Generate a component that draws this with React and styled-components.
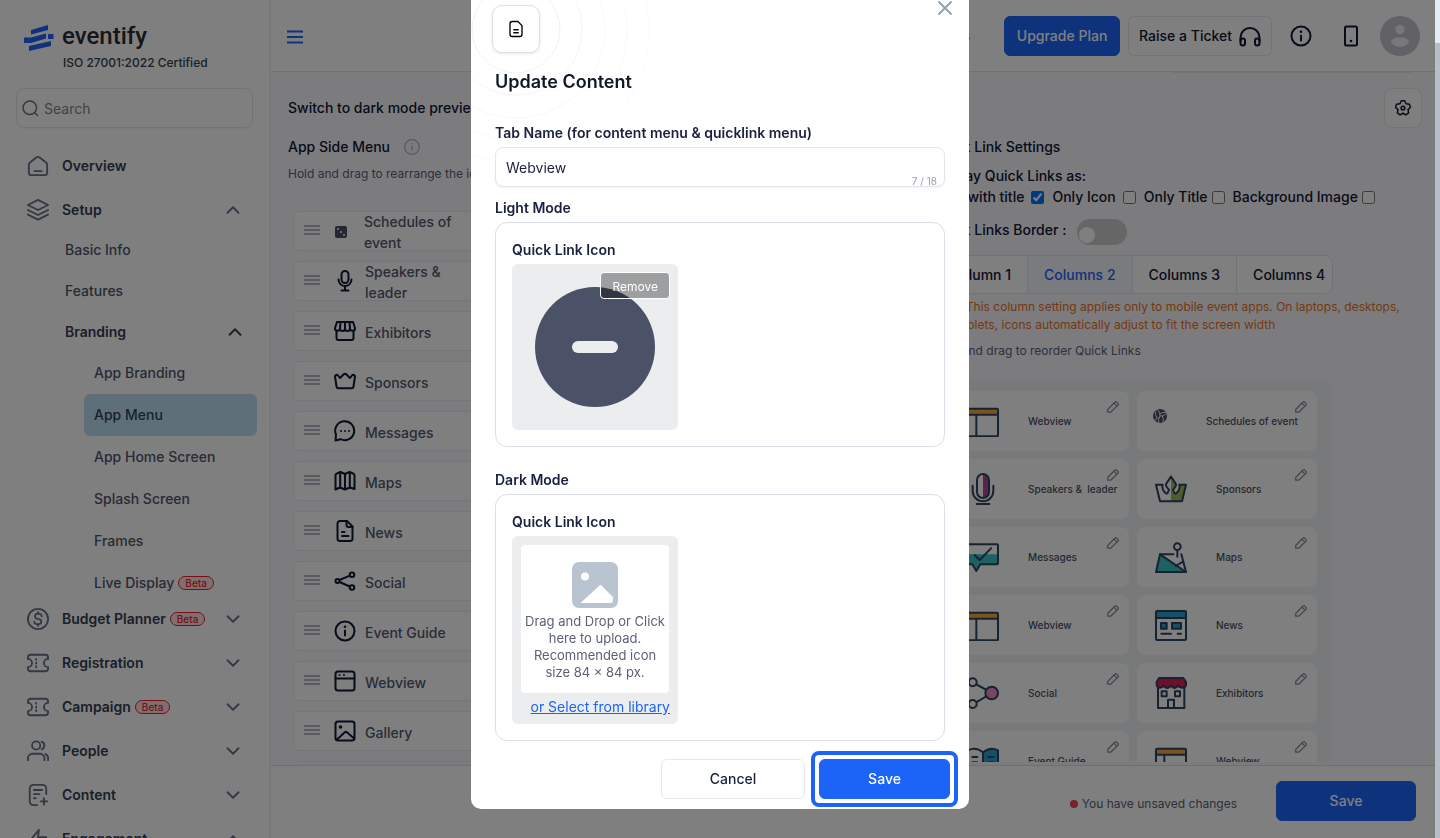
import React from "react";
import styled, { createGlobalStyle, css } from "styled-components";
import { ChevronDown, ChevronUp, X } from "lucide-react";

const Global = createGlobalStyle`
  *, *::before, *::after { box-sizing: border-box; }
  body { margin: 0; font-family: Inter, "Liberation Sans", sans-serif; font-size: 14px; line-height: 20px; color: #101633; background: #fff; overflow: hidden; }
  button, input { font: inherit; color: inherit; }
  button { cursor: pointer; }
  h1, h2, h3, p, ul, fieldset { margin: 0; padding: 0; }
  ul { list-style: none; }
  a { color: inherit; text-decoration: none; }
  svg { display: block; flex: none; }
`;

/* ---------- icons ---------- */

const Line = ({ size = 24, w = 2, children }) => (
  <svg width={size} height={size} viewBox="0 0 24 24" fill="none" stroke="currentColor" strokeWidth={w} strokeLinecap="round" strokeLinejoin="round" aria-hidden="true">
    {children}
  </svg>
);

const Dots = ({ points, r = 1 }) => points.map(([x, y]) => <circle key={`${x}-${y}`} cx={x} cy={y} r={r} fill="currentColor" stroke="none" />);

const Ticket = () => (
  <>
    <path d="M1 6a3 3 0 0 1 3-3h16a3 3 0 0 1 3 3v1.500a4.500 4.500 0 0 0 0 9V18a3 3 0 0 1-3 3H4a3 3 0 0 1-3-3v-1.500a4.500 4.500 0 0 0 0-9z" />
    <path d="M10 7.500v1M10 11.500v1M10 15.500v1" />
  </>
);

const navIcons = {
  overview: <><path d="M2 10.500a3 3 0 0 1 1.200-2.400l7-5.400a3 3 0 0 1 3.600 0l7 5.400a3 3 0 0 1 1.200 2.400V19a3 3 0 0 1-3 3H5a3 3 0 0 1-3-3z" /><path d="M8 17.500h8" /></>,
  setup: <><path d="M12 1 1 6.500 12 12l11-5.500z" /><path d="m1 12 11 5.500L23 12" /><path d="m1 17 11 5.500L23 17" /></>,
  budget: <><circle cx="12" cy="12" r="11" /><path d="M8 15a2.800 2.800 0 0 0 2.800 2.600h2.200a2.700 2.700 0 0 0 .6-5.300l-3.200-.8a2.700 2.700 0 0 1 .6-5.200h2A2.800 2.800 0 0 1 16 9M12 4.500v1.800M12 17.600v1.900" /></>,
  ticket: <Ticket />,
  people: <><circle cx="10" cy="6" r="4.500" /><path d="M1 22v-2a5 5 0 0 1 5-5h8a5 5 0 0 1 5 5v2M16 1.800a4.500 4.500 0 0 1 0 8.400M23 22v-2a5 5 0 0 0-3-4.600" /></>,
  content: <><path d="M21 11V5a4 4 0 0 0-4-4H7a4 4 0 0 0-4 4v14a4 4 0 0 0 4 4h4M7.500 6.500h9M7.500 11h6M7.500 15.500h2M18.500 15.500v7M15 19h7" /></>,
  engagement: <path d="M13 2 3 14h9l-1 8 10-12h-9z" />,
};

const menuIcons = {
  mic: <><rect x="8.500" y="2" width="7" height="12" rx="3.500" /><path d="M5.500 10.500a6.500 6.500 0 0 0 13 0M12 17v4M8.500 21.500h7" /></>,
  shop: <><path d="M4 3h16l2 6a2.500 2.500 0 0 1-5 .5 2.500 2.500 0 0 1-5 0 2.500 2.500 0 0 1-5 0A2.500 2.500 0 0 1 2 9zM7.500 3 7 9.500M12 3v6.500M16.500 3l.5 6.500" /><path d="M3.500 12v7a2 2 0 0 0 2 2h13a2 2 0 0 0 2-2v-7" /></>,
  crown: <path d="M2 7.500A1.700 1.700 0 0 1 5 6.500l2 2.500 3.500-3.500a2 2 0 0 1 3 0L17 9l2-2.500a1.700 1.700 0 0 1 3 1l-1.500 10a2 2 0 0 1-2 1.700h-13a2 2 0 0 1-2-1.700z" />,
  chat: <><path d="M2.500 21.500 3 15.500a9.500 9.500 0 1 1 4.500 4.700z" /><Dots points={[[8, 12], [12, 12], [16, 12]]} /></>,
  map: <><path d="M2.500 6.500a2 2 0 0 1 1.500-2L7.500 3l4.500 2 4.500-2 3.500 1.500a2 2 0 0 1 1.500 2V20L17 18.500 12 20.500 7 18.500 2.500 20.500z" /><path d="M7.200 3.500v15M12 5v15M16.800 3.500v15" /></>,
  news: <><path d="M14 2H7a2.500 2.500 0 0 0-2.500 2.500v15A2.500 2.500 0 0 0 7 22h10a2.500 2.500 0 0 0 2.500-2.500V7.500z" /><path d="M13.500 2v4a2 2 0 0 0 2 2h4M9 13h2.500M9 17h6.500" /></>,
  share: <><circle cx="4.500" cy="12" r="2" /><circle cx="19" cy="5.800" r="2.300" /><circle cx="19" cy="18.500" r="2.300" /><path d="m6.500 11 10.300-4.300M6.500 13l10.300 4.500" /></>,
  info: <><circle cx="12" cy="12" r="9.500" /><path d="M12 11.500v5" /><Dots points={[[12, 7.800]]} r={1.300} /></>,
  window: <><rect x="2.500" y="2.500" width="19" height="19" rx="2.500" /><path d="M2.500 9.500h19" /><Dots points={[[6.500, 6], [11, 6]]} /></>,
  gallery: <><rect x="2.500" y="2.500" width="19" height="19" rx="2.500" /><path d="M4 20.500l7.500-7a2 2 0 0 1 2.700 0l7 6" /><Dots points={[[7.500, 8]]} r={1.800} /></>,
};

const Dice = () => (
  <svg width="12" height="24" viewBox="0 0 12 24" aria-hidden="true">
    <rect y="7" width="12" height="12" rx="2" fill="#4a5066" />
    {[3, 6, 9].map((n) => <circle key={n} cx={n} cy={n + 7} r="1" fill="#fff" />)}
  </svg>
);

const ink = "#2f4560";
const Art = ({ children, size = 32 }) => (
  <svg width={size} height={size} viewBox="0 0 96 96" fill="none" stroke={ink} strokeWidth="6" strokeLinecap="round" strokeLinejoin="round" aria-hidden="true">
    {children}
  </svg>
);

const art = {
  webview: <><path d="M3 11h90v18H3z" fill="#f5a83d" stroke="none" /><rect x="3" y="11" width="90" height="83" rx="3" /><path d="M3 29h90M28 29v65" /></>,
  mic: <><path d="M48 3c10 0 18 8 18 18v36c0 10-8 18-18 18z" fill="#b8439f" stroke="none" /><rect x="30" y="3" width="36" height="72" rx="18" /><path d="M17 38v16a31 31 0 0 0 62 0V38M29 93h38" /></>,
  crown: <><path d="M48 11l14 21c4 8-4 13-8 18l4 10c4 6 14-5 16-17l-1-8h20L81 85H48z" fill="#98bd5c" stroke="none" /><path d="M48 11 34 32c-4 8 4 13 8 18l-2 6 8 6 8-6-2-6c4-5 12-10 8-18z" fill="#fff" stroke="none" /><path d="M48 11l14 21c4 8-4 13-8 18v35h-6z" fill="#98bd5c" stroke="none" /><path d="M3 35h20l-1 8c2 12 12 23 16 17l4-10c-4-5-12-10-8-18l14-21 14 21c4 8-4 13-8 18l4 10c4 6 14-5 16-17l-1-8h20L81 85H15z" /></>,
  messages: <><path d="M3 40h90v30H38L28 90 18 70H3z" fill="#3cc3c6" stroke="none" /><path d="M6 10h84q3 0 3 3v54q0 3-3 3H40L28 90 16 70H6q-3 0-3-3V13q0-3 3-3z" /><path d="m23 42 15 15 34-35" /></>,
  maps: <><path d="M15 40 3 93h90z" fill="#3cc3c6" /><path d="M15 40h40M79 40l14 53M62 75l22-13" /><circle cx="67" cy="17" r="10" /><path d="M67 27v20" /></>,
  news: <><path d="M3 6h90v21H3z" fill="#2f9fd0" stroke="none" /><rect x="3" y="6" width="90" height="87" rx="3" /><path d="M3 27h90M19 74h29M68 74h10" /><path d="M18 42h17v17H18zM51 42h27v17H51z" fill="#2f9fd0" /></>,
  social: <><path d="m17 16 58 32-58 34" /><circle cx="17" cy="16" r="12" fill="#fff" /><circle cx="17" cy="81" r="12" fill="#fff" /><circle cx="74" cy="48" r="19" fill="#f08ac8" /></>,
  exhibitors: <><path d="M9 30v63h79V30M39 93V68h18v25M20 43h15v15H20zM60 43h15v15H60z" /><path d="M12 3h73l8 12v9q-2 8-12 8-8 0-12-6-4 6-11 7-6-2-10-8-4 6-11 8-7-1-11-7-4 6-11 6-8 0-10-8v-9z" fill="#e01f56" /></>,
  guide: <><path d="M48 22q22-18 45-6v66q-23-8-45 4z" fill="#2f9fd0" /><path d="M48 22Q26 4 3 16v66q23-8 45 4zM16 36h15M16 52h15M64 36h15M64 52h15" /></>,
};

const Volley = () => (
  <svg width="14" height="14" viewBox="0 0 24 24" aria-hidden="true">
    <circle cx="12" cy="12" r="12" fill="#4a5066" />
    <path d="M12 12A14 14 0 0 0 7 0M12 12a14 14 0 0 0 11-4M12 12a14 14 0 0 0-2 12M12 8a13 13 0 0 1 10-2M9 14a13 13 0 0 1-8 6M16 12a13 13 0 0 1 1 11M6 15A13 13 0 0 1 5 4" fill="none" stroke="#fff" strokeWidth="1.600" />
  </svg>
);

/* ---------- page shell ---------- */

const Page = styled.div`display: flex; height: 100vh; overflow: hidden;`;
const Sidebar = styled.aside`width: 271px; flex: none; border-right: 2px solid #f0f0f3; overflow: hidden; background: #fff;`;
const Main = styled.main`flex: 1; min-width: 0; display: flex; flex-direction: column; background: #f8f8fc;`;

const Brand = styled.div`display: flex; gap: 8px; padding: 20px 0 0 24px; color: #2c2c34;`;
const Mark = styled.svg`margin-top: 5px;`;
const Wordmark = styled.div`font-family: Roboto, sans-serif; font-size: 24px; line-height: 32px; font-weight: 500;`;
const Iso = styled.p`padding: 1px 0 0 63px; font-size: 12px; line-height: 20px; font-weight: 500; color: #344054;`;

const SearchBox = styled.label`
  display: flex; align-items: center; gap: 5px; height: 40px; margin: 15px 16px 20px; padding: 0 5px;
  border: 1px solid #e6e7ee; border-radius: 8px; box-shadow: 0 1px 2px rgba(16, 24, 40, .05); color: #667085;
  input { min-width: 0; flex: 1; border: 0; outline: 0; padding: 2px 0 0; background: none; }
  input::placeholder { color: #858585; opacity: 1; }
`;

const NavRow = styled.button`
  display: flex; align-items: center; gap: 13px; width: 100%; height: 36px; margin-bottom: ${(p) => (p.$open ? 0 : 8)}px;
  padding: 0 25px 0 27px; border: 0; background: none; color: #667085; text-align: left;
`;
const NavText = styled.span`flex: 1; display: flex; align-items: center; gap: 4px; font-weight: 600; color: #344054;`;
const Sub = styled.ul`padding-top: 1px; margin-bottom: -3px;`;
const SubLink = styled.a`
  display: flex; align-items: center; justify-content: space-between; height: 41px; padding: 0 23px 0 65px;
  font-weight: ${(p) => (p.$strong ? 600 : 500)}; color: ${(p) => (p.$strong ? "#344054" : "#4f556b")};
`;
const DeepLink = styled.a`
  display: flex; align-items: center; gap: 4px; height: 42px; margin: 0 12px 0 84px; padding-left: 10px; border-radius: 6px;
  font-weight: 500; color: ${(p) => (p.$active ? "#3b3f4d" : "#4f556b")}; background: ${(p) => (p.$active ? "#bcdff3" : "none")};
`;
const Beta = styled.span`
  height: 14px; padding: 0 6px; border: 1px solid #ee1f2b; border-radius: 8px; font-size: 10px; line-height: 12px; font-weight: 500; color: #ee1f2b; background: #ffdfe0;
`;

const TopBar = styled.header`
  display: flex; align-items: center; height: 72px; flex: none; padding: 0 20px 0 16px; border-bottom: 1px solid #e3e3ea; background: #fff;
`;
const IconButton = styled.button`display: grid; place-items: center; padding: 0; border: 0; background: none; color: ${(p) => p.$color || "#101633"};`;
const TopActions = styled.div`display: flex; align-items: center; margin-left: auto; font-weight: 500;`;
const DocsLink = styled.a`margin-right: 34px;`;

const Button = styled.button`
  height: 40px; border-radius: 6px; font-weight: 500; padding: 0; border: 1px solid #e8e8ef; background: #fff; white-space: nowrap;
  display: inline-flex; align-items: center; justify-content: center; gap: 6px; width: ${(p) => p.$width || "auto"};
  ${(p) => p.$primary && css`border-color: #1c64f8; background: #1c64f8; color: #fff;`}
`;
const RaiseButton = styled(Button)`margin: 0 17px 0 8px; padding: 0 9px 0 10px;`;
const PhoneButton = styled(IconButton)`margin: 0 17px 0 26px;`;

const Body = styled.div`flex: 1; min-height: 0; overflow: hidden; padding: 0 18px 0 17px; margin-bottom: 3px;`;
const ScrolledEdge = styled.div`width: 240px; height: 1px; margin: 0 10px 15px auto; background: #e9e9f1;`;
const PreviewRow = styled.div`display: flex; align-items: center; justify-content: space-between; height: 40px; font-weight: 500;`;
const GearButton = styled(Button)`padding: 0 9px; border-radius: 8px;`;
const Columns = styled.div`display: grid; grid-template-columns: minmax(0, 1fr) 490px; padding-top: 9px;`;
const Heading = styled.h2`display: flex; align-items: center; gap: 14px; font-size: 14px; line-height: 20px; font-weight: 500;`;
const Hint = styled.p`font-size: 12px; line-height: 18px; color: #5c6178;`;
const MenuHint = styled(Hint)`margin-top: 8px;`;

const MenuList = styled.ul`display: flex; flex-direction: column; gap: 10px; width: 300px; margin: 28px 0 0 5px;`;
const MenuItem = styled.li`
  display: flex; align-items: center; height: 40px; padding-left: 10px; border: 1px solid #ececf2; border-radius: 6px; background: #fff;
  svg { margin: 0 8px 0 13px; }
`;
const Grip = styled.span`width: 16px; height: 10px; margin-bottom: 2px; border-top: 2px solid #b5b7c3; border-bottom: 2px solid #b5b7c3;
  background: linear-gradient(#b5b7c3, #b5b7c3) 0 2px / 16px 2px no-repeat; flex: none;`;
const DiceSlot = styled.span`display: flex; margin: 0 9px 0 2px; padding-right: 8px; svg { margin-right: 0; }`;
const MenuLabel = styled.span`max-width: 100px; padding-top: 2px; line-height: 21px; font-weight: 500; color: #535970;`;

const Settings = styled.section`font-weight: 500;`;
const DisplayAs = styled.p`padding-top: 9px; line-height: 20px;`;
const Checks = styled.div`display: flex; align-items: center; height: 22px; padding-left: 3px; white-space: nowrap; gap: 8px;`;
const Check = styled.label`
  display: flex; align-items: center; gap: ${(p) => (p.$wide ? 7 : 4)}px;
  input { width: 13px; height: 13px; margin: 0; }
`;
const BorderRow = styled.label`display: flex; align-items: flex-start; gap: 11px; height: 26px; margin: 11px 0 10px; line-height: 22px;`;
const Switch = styled.input`
  appearance: none; width: 50px; height: 26px; margin: 0; padding: 8px 0 0 2px; border-radius: 13px; background: #ccc;
  &::before { content: ""; display: block; width: 16px; height: 16px; border-radius: 50%; background: #fff; }
`;
const Tabs = styled.div`display: flex; width: 401px; height: 39px; border: 1px solid #e3e4ef; border-radius: 8px; background: #fff; overflow: hidden;`;
const Tab = styled.button`
  padding: 0 16px; border: 0; border-right: 1px solid #e3e4ef; white-space: nowrap; font-weight: 500; background: ${(p) => (p.$on ? "#f4f6fc" : "none")};
  color: ${(p) => (p.$on ? "#1c64f8" : "inherit")};
  &:first-child { padding-left: 17px; }
  &:last-child { border-right: 0; padding-right: 0; }
`;
const Note = styled(Hint)`margin: 4px 0 8px; font-weight: 400; color: #ea7222;`;
const PlainHint = styled(Hint)`font-weight: 400;`;
const LinkPanel = styled.ul`
  display: grid; grid-template-columns: 180px 180px; gap: 8px; width: 400px; margin-top: 19px; padding: 12px 15px 12px 17px; border-radius: 8px; background: #f1f3f6;
`;
const LinkCard = styled.li`
  position: relative; display: flex; align-items: center; gap: 29px; height: 60px; padding-left: 18px; border-radius: 8px; background: #fff;
  font-size: 10px; line-height: 14px; font-weight: 500; color: #4a4f64; white-space: pre;
`;
const SmallCard = styled(LinkCard)`gap: 39px; padding-left: 16px; svg:first-child { margin-bottom: 10px; }`;
const EditButton = styled(IconButton)`position: absolute; top: 9px; right: 9px; color: #85899a;`;

const FooterBar = styled.footer`
  display: flex; align-items: center; justify-content: flex-end; height: 73px; flex: none; padding: 0 24px 2px; border-top: 1px solid #dfdfe6; background: #fff;
`;
const Unsaved = styled.p`display: flex; align-items: center; gap: 4px; margin: 6px 39px 0 0; font-size: 12px; color: #5c6178;
  &::before { content: ""; width: 8px; height: 8px; border-radius: 50%; background: #e5484d; }`;

/* ---------- dialog ---------- */

const Overlay = styled.div`position: fixed; inset: 0; display: flex; justify-content: center; align-items: flex-start; background: rgba(0, 0, 0, .5);`;
const ScrollTrack = styled.div`position: absolute; top: 0; right: 0; bottom: 0; width: 5px; padding-top: 43px; background: #e3ebf3;
  &::before { content: ""; display: block; height: 100%; background: #b8bdc7; }`;
const Dialog = styled.form`position: relative; width: 498px; padding-bottom: 2px; border-radius: 0 0 10px 10px; background: #fff; color: #1a2140; overflow: hidden;`;
const Rings = styled.svg`position: absolute; top: 0; left: 0;`;
const DialogTop = styled.div`position: relative; display: flex; justify-content: space-between; align-items: flex-start; padding: 5px 12px 0 21px;`;
const DialogIcon = styled.span`display: grid; place-items: center; width: 48px; height: 48px; border: 1px solid #dfe1ea; border-radius: 10px; background: #fff; color: #000; box-shadow: 0 1px 3px rgba(16, 24, 40, .1);`;
const CloseButton = styled(IconButton)`margin-top: -9px;`;
const DialogBody = styled.div`position: relative; padding: 15px 24px 0;`;
const Title = styled.h1`margin-bottom: 27px; font-size: 18px; line-height: 28px; font-weight: 600; color: #101828;`;
const Label = styled.label`display: block; line-height: 20px; font-weight: 600;`;
const Field = styled.div`
  position: relative; margin: 4px 0 11px;
  input { display: block; width: 100%; height: 40px; padding: 0 10px; border: 1px solid #e4e6ec; border-radius: 8px; background: #fff; outline: 0; box-shadow: 0 1px 2px rgba(16, 24, 40, .05); }
`;
const Counter = styled.span`position: absolute; right: 8px; bottom: 0; font-size: 10px; line-height: 12px; color: #98a2b3;`;
const ModeTitle = styled.h2`font-size: 14px; line-height: 20px; font-weight: 600;`;
const ModeBox = styled.section`margin: 4px 0 ${(p) => (p.$last ? 10 : 23)}px; padding: 17px 16px 16px; border: 1px solid #dddfe8; border-radius: 12px;`;
const IconName = styled.h3`margin-bottom: 4px; font-size: 14px; line-height: 20px; font-weight: 600;`;
const IconTile = styled.div`position: relative; width: 166px; padding: ${(p) => (p.$empty ? "9px 8px 7px 9px" : "23px")}; border-radius: 6px; background: #ecedef;`;
const RemoveButton = styled.button`position: absolute; top: 8px; right: 8px; height: 27px; padding: 2px 11px 0; border: 1px solid #fff; border-radius: 4px; font-size: 12px; line-height: 22px; color: #fff; background: rgba(0, 0, 0, .33);`;
const DropZone = styled.button`
  display: flex; flex-direction: column; align-items: center; gap: 5px; width: 148px; height: 148px; padding: 17px 0 0; border: 0; border-radius: 4px;
  background: #fff; color: #5c6178; font-size: 13px; line-height: 17px;
`;
const LibraryLink = styled.a`display: block; margin-top: 4px; line-height: 20px; text-align: right; color: #1c64f8; text-decoration: underline; white-space: nowrap;`;
const Actions = styled.div`display: flex; justify-content: flex-end; align-items: center; gap: 6px; padding-right: 11px;`;
const FocusRing = styled.span`display: flex; padding: 4px; border: 4px solid #1c64f8; border-radius: 8px;`;

const sideMenu = [
  ["Speakers & leader", "mic"], ["Exhibitors", "shop"], ["Sponsors", "crown"], ["Messages", "chat"], ["Maps", "map"], ["News", "news"],
  ["Social", "share"], ["Event Guide", "info"], ["Webview", "window"], ["Gallery", "gallery"],
];
const quickLinks = [
  ["Speakers &  leader", "mic"], ["Sponsors", "crown"], ["Messages", "messages"], ["Maps", "maps"], ["Webview", "webview"],
  ["News", "news"], ["Social", "social"], ["Exhibitors", "exhibitors"], ["Event Guide", "guide"], ["Webview", "webview"],
];

const NavGroup = ({ icon, text, beta, open, plain }) => (
  <NavRow type="button" $open={open && !plain}>
    <Line size={22} w={2}>{navIcons[icon]}</Line>
    <NavText>{text}{beta && <Beta>Beta</Beta>}</NavText>
    {plain ? null : open ? <ChevronUp size={22} strokeWidth={2} /> : <ChevronDown size={22} strokeWidth={2} />}
  </NavRow>
);

const Edit = ({ name }) => (
  <EditButton type="button" aria-label={`Edit ${name}`}>
    <svg width="14" height="14" viewBox="0 0 14 14" fill="none" stroke="currentColor" strokeWidth="1.200" strokeLinejoin="round">
      <path d="M1.700 9.500 9 2a1 1 0 0 1 1.500 0l1.600 1.600a1 1 0 0 1 0 1.400l-7.400 7.200H1.700zM8 3.200l2.900 2.900" />
    </svg>
  </EditButton>
);

const LinkTile = ({ name, icon }) => (
  <LinkCard><Art>{art[icon]}</Art><span>{name}</span><Edit name={name} /></LinkCard>
);

const NavSidebar = () => (
  <Sidebar>
    <Brand>
      <Mark width="30" height="27" viewBox="0 0 30 27" fill="#1c64f8" aria-hidden="true">
        <path d="M7 5 24 0v5L7 9.500zM0 12.500h7L22 8.500v5L7 18H0zM24 9h5.500v5H24zM5 21l22-5v5L5 26z" />
      </Mark>
      <Wordmark>eventify</Wordmark>
    </Brand>
    <Iso>ISO 27001:2022 Certified</Iso>
    <SearchBox>
      <Line size={17} w={2}><circle cx="11" cy="11" r="9.500" /><path d="m18.500 18.500 3.500 3.500" /></Line>
      <input type="search" placeholder="Search" aria-label="Search" />
    </SearchBox>
    <nav>
      <NavGroup icon="overview" text="Overview" plain />
      <NavGroup icon="setup" text="Setup" open />
      <Sub>
        <li><SubLink href="#basic">Basic Info</SubLink></li>
        <li><SubLink href="#features">Features</SubLink></li>
        <li>
          <SubLink href="#branding" $strong>Branding<ChevronUp size={22} strokeWidth={2} /></SubLink>
          <ul>
            {["App Branding", "App Menu", "App Home Screen", "Splash Screen", "Frames", "Live Display"].map((t) => (
              <li key={t}><DeepLink href="#page" $active={t === "App Menu"}>{t}{t === "Live Display" && <Beta>Beta</Beta>}</DeepLink></li>
            ))}
          </ul>
        </li>
      </Sub>
      <NavGroup icon="budget" text="Budget Planner" beta />
      <NavGroup icon="ticket" text="Registration" />
      <NavGroup icon="ticket" text="Campaign" beta />
      <NavGroup icon="people" text="People" />
      <NavGroup icon="content" text="Content" />
      <NavGroup icon="engagement" text="Engagement" open />
    </nav>
  </Sidebar>
);

const Header = () => (
  <TopBar>
    <IconButton type="button" aria-label="Toggle menu" $color="#1c64f8">
      <svg width="16" height="16" viewBox="0 0 16 16" stroke="currentColor" strokeWidth="2"><path d="M0 3.500h16M0 9h16M0 14.500h16" /></svg>
    </IconButton>
    <TopActions>
      <DocsLink href="#docs">Docs</DocsLink>
      <Button type="button" $primary $width="116px">Upgrade Plan</Button>
      <RaiseButton type="button">
        Raise a Ticket
        <Line size={24}><path d="M2.500 17v-3.500a9.500 9.500 0 0 1 19 0V17" /><rect x="2.500" y="14.500" width="4.500" height="7" rx="2.200" /><rect x="17" y="14.500" width="4.500" height="7" rx="2.200" /></Line>
      </RaiseButton>
      <IconButton type="button" aria-label="Information"><Line size={24}>{menuIcons.info}</Line></IconButton>
      <PhoneButton type="button" aria-label="Mobile preview"><Line size={24}><rect x="6" y="2.500" width="12" height="19" rx="1.500" /><Dots points={[[12, 17]]} r={1.300} /></Line></PhoneButton>
      <IconButton type="button" aria-label="Account">
        <svg width="40" height="40" viewBox="0 0 40 40"><circle cx="20" cy="20" r="20" fill="#c3c5cc" /><g fill="#f0f0f2"><circle cx="20" cy="13.500" r="4.700" /><path d="M11 26.500c0-3 4-5 9-5s9 2 9 5c-2 2.700-5 4.500-9 4.500s-7-1.800-9-4.500z" /></g></svg>
      </IconButton>
    </TopActions>
  </TopBar>
);

const UpdateDialog = () => (
  <Overlay>
    <Dialog role="dialog" aria-modal="true" aria-labelledby="dialog-title" onSubmit={(e) => e.preventDefault()}>
      <Rings width="190" height="170" fill="none" aria-hidden="true">
        {[["44", "#f2f3f6"], ["66", "#f5f6f8"], ["89", "#f7f8fa"], ["111", "#f9fafb"], ["133", "#fbfbfc"]].map(([r, c]) => <circle key={r} cx="45" cy="29" r={r} stroke={c} />)}
      </Rings>
      <DialogTop>
        <DialogIcon>
          <Line size={18} w={1.800}><path d="M14.500 2H7a3 3 0 0 0-3 3v14a3 3 0 0 0 3 3h10a3 3 0 0 0 3-3V7.500zM9 13h6M9 17h6" /></Line>
        </DialogIcon>
        <CloseButton type="button" aria-label="Close" $color="#98a2b3"><X size={24} strokeWidth={2} /></CloseButton>
      </DialogTop>
      <DialogBody>
        <Title id="dialog-title">Update Content</Title>
        <Label htmlFor="tab-name">Tab Name (for content menu &amp; quicklink menu)</Label>
        <Field>
          <input id="tab-name" type="text" defaultValue="Webview" maxLength={18} />
          <Counter>7 / 18</Counter>
        </Field>
        <ModeTitle>Light Mode</ModeTitle>
        <ModeBox>
          <IconName>Quick Link Icon</IconName>
          <IconTile>
            <svg width="120" height="120" aria-hidden="true"><circle cx="60" cy="60" r="60" fill="#4b5166" /><rect x="37" y="54" width="46" height="12" rx="6" fill="#ecedef" /></svg>
            <RemoveButton type="button">Remove</RemoveButton>
          </IconTile>
        </ModeBox>
        <ModeTitle>Dark Mode</ModeTitle>
        <ModeBox $last>
          <IconName>Quick Link Icon</IconName>
          <IconTile $empty>
            <DropZone type="button">
              <svg width="46" height="46" viewBox="0 0 46 46" aria-hidden="true"><rect width="46" height="46" rx="7" fill="#b9c4d0" /><circle cx="13" cy="14.500" r="4" fill="#fff" /><path d="M8.500 41 27.500 23.500q1-1 2 0L40 34q1 1 1 2v2q0 3-3 3z" fill="#fff" /></svg>
              <span>Drag and Drop or Click here to upload. Recommended icon size 84 × 84 px.</span>
            </DropZone>
            <LibraryLink href="#library">or Select from library</LibraryLink>
          </IconTile>
        </ModeBox>
      </DialogBody>
      <Actions>
        <Button type="button" $width="144px">Cancel</Button>
        <FocusRing><Button type="submit" $primary $width="131px">Save</Button></FocusRing>
      </Actions>
    </Dialog>
    <ScrollTrack />
  </Overlay>
);

export default function App() {
  return (
    <>
      <Global />
      <Page>
        <NavSidebar />
        <Main>
          <Header />
          <Body>
            <ScrolledEdge />
            <PreviewRow>
              Switch to dark mode preview
              <GearButton type="button" aria-label="Settings">
                <Line size={18}><path d="M9.750 2.260h4.500L16.100 6.300l4.500.55L22 11.100l-3.300 3.100.8 4.400-3.600 2.600L12 19l-3.900 2.200-3.600-2.600.8-4.400L2 11.100l1.400-4.250 4.500-.55z" /><circle cx="12" cy="12" r="2.500" /></Line>
              </GearButton>
            </PreviewRow>
            <Columns>
              <section>
                <Heading>
                  App Side Menu
                  <svg width="16" height="16" viewBox="0 0 16 16" fill="none" stroke="#aab4c5" strokeWidth="1.300" aria-hidden="true"><circle cx="8" cy="8" r="7.300" /><path d="M8 7v4.500M8 4v1.500" /></svg>
                </Heading>
                <MenuHint>Hold and drag to rearrange the icons</MenuHint>
                <MenuList>
                  <MenuItem><Grip /><DiceSlot><Dice /></DiceSlot><MenuLabel>Schedules of event</MenuLabel></MenuItem>
                  {sideMenu.map(([name, icon]) => (
                    <MenuItem key={name}><Grip /><Line>{menuIcons[icon]}</Line><MenuLabel>{name}</MenuLabel></MenuItem>
                  ))}
                  <MenuItem />
                </MenuList>
              </section>
              <Settings>
                <Heading>Quick Link Settings</Heading>
                <DisplayAs>Display Quick Links as:</DisplayAs>
                <Checks>
                  <Check $wide>Icon with title <input type="checkbox" defaultChecked /></Check>
                  <Check $wide>Only Icon <input type="checkbox" /></Check>
                  <Check>Only Title <input type="checkbox" /></Check>
                  <Check>Background Image <input type="checkbox" /></Check>
                </Checks>
                <BorderRow>Quick Links Border : <Switch type="checkbox" role="switch" /></BorderRow>
                <Tabs>
                  <Tab type="button">Column 1</Tab>
                  <Tab type="button" $on>Columns 2</Tab>
                  <Tab type="button">Columns 3</Tab>
                  <Tab type="button">Columns 4</Tab>
                </Tabs>
                <Note>Note: This column setting applies only to mobile event apps. On laptops, desktops, and tablets, icons automatically adjust to fit the screen width</Note>
                <PlainHint>Hold and drag to reorder Quick Links</PlainHint>
                <LinkPanel>
                  <LinkTile name="Webview" icon="webview" />
                  <SmallCard><Volley /><span>Schedules of event</span><Edit name="Schedules of event" /></SmallCard>
                  {quickLinks.map(([name, icon], i) => <LinkTile key={i} name={name} icon={icon} />)}
                </LinkPanel>
              </Settings>
            </Columns>
          </Body>
          <FooterBar>
            <Unsaved>You have unsaved changes</Unsaved>
            <Button type="button" $primary $width="140px">Save</Button>
          </FooterBar>
        </Main>
      </Page>
      <UpdateDialog />
    </>
  );
}
